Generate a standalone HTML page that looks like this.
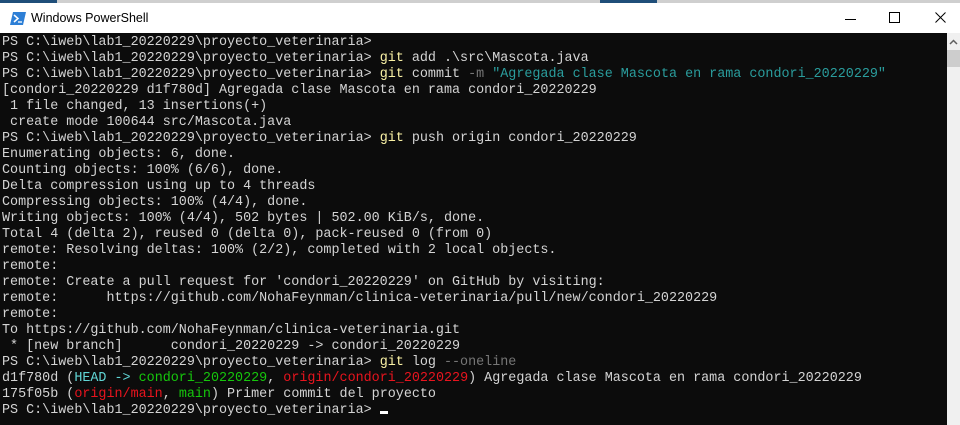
<!DOCTYPE html>
<html><head><meta charset="utf-8"><style>
body{margin:0;width:960px;height:425px;overflow:hidden;background:#0c0c0c;position:relative;font-family:"Liberation Sans",sans-serif}
#top{position:absolute;left:0;top:0;width:960px;height:3px;background:#cfcfcf}
#tb{position:absolute;left:0;top:3px;width:960px;height:30px;background:#fff}
#title{position:absolute;left:31px;top:8px;font-size:12.5px;color:#000}
#term{position:absolute;left:2px;top:35px;font-family:"Liberation Mono",monospace;font-size:13.4px;line-height:16px;color:#d4d4d4;white-space:pre}
#sb{position:absolute;left:947px;top:33px;width:13px;height:392px;background:#f0f0f0}
.y{color:#f9f1a5}.c{color:#2a9d9d}.g{color:#767676}.h{color:#61d6d6}.gr{color:#16c60c}.r{color:#e8141e}
.cur{display:inline-block;width:8px;height:3px;background:#fff;vertical-align:-1px}
</style></head><body>
<div id="top"><div style="position:absolute;left:0;top:0;width:57px;height:3px;background:#1f4e79"></div><div style="position:absolute;left:600px;top:0;width:57px;height:3px;background:#1f4e79"></div></div>
<div id="tb">
<svg style="position:absolute;left:10px;top:9px" width="16" height="13" viewBox="0 0 16 13"><polygon points="3,0 16,0 13,13 0,13" fill="#2d7fd6"/><polyline points="4,3 8,6.5 4,10" fill="none" stroke="#fff" stroke-width="1.5"/><line x1="8" y1="10" x2="12" y2="10" stroke="#fff" stroke-width="1.3"/></svg>
<div id="title">Windows PowerShell</div>
<svg style="position:absolute;left:845px;top:10px" width="12" height="12"><line x1="0" y1="6.5" x2="11" y2="6.5" stroke="#000"/></svg>
<svg style="position:absolute;left:889px;top:9px" width="12" height="12"><rect x="0.5" y="0.5" width="10" height="10" fill="none" stroke="#000"/></svg>
<svg style="position:absolute;left:935px;top:9px" width="12" height="12"><path d="M0.5 0.5L10.5 10.5M10.5 0.5L0.5 10.5" stroke="#000"/></svg>
</div>
<div id="sb"><svg style="position:absolute;left:2px;top:6px" width="9" height="6"><polyline points="1,5 4.5,1.5 8,5" fill="none" stroke="#606060" stroke-width="1.5"/></svg><div style="position:absolute;left:0;top:17px;width:13px;height:17px;background:#cdcdcd"></div></div>
<div id="term">PS C:\iweb\lab1_20220229\proyecto_veterinaria>
PS C:\iweb\lab1_20220229\proyecto_veterinaria> <span class="y">git</span> add .\src\Mascota.java
PS C:\iweb\lab1_20220229\proyecto_veterinaria> <span class="y">git</span> commit <span class="g">-m</span> <span class="c">"Agregada clase Mascota en rama condori_20220229"</span>
[condori_20220229 d1f780d] Agregada clase Mascota en rama condori_20220229
 1 file changed, 13 insertions(+)
 create mode 100644 src/Mascota.java
PS C:\iweb\lab1_20220229\proyecto_veterinaria> <span class="y">git</span> push origin condori_20220229
Enumerating objects: 6, done.
Counting objects: 100% (6/6), done.
Delta compression using up to 4 threads
Compressing objects: 100% (4/4), done.
Writing objects: 100% (4/4), 502 bytes | 502.00 KiB/s, done.
Total 4 (delta 2), reused 0 (delta 0), pack-reused 0 (from 0)
remote: Resolving deltas: 100% (2/2), completed with 2 local objects.
remote:
remote: Create a pull request for 'condori_20220229' on GitHub by visiting:
remote:      https://github.com/NohaFeynman/clinica-veterinaria/pull/new/condori_20220229
remote:
To https://github.com/NohaFeynman/clinica-veterinaria.git
 * [new branch]      condori_20220229 -> condori_20220229
PS C:\iweb\lab1_20220229\proyecto_veterinaria> <span class="y">git</span> log <span class="g">--oneline</span>
d1f780d (<span class="h">HEAD -></span> <span class="gr">condori_20220229</span>, <span class="r">origin/condori_20220229</span>) Agregada clase Mascota en rama condori_20220229
175f05b (<span class="r">origin/main</span>, <span class="gr">main</span>) Primer commit del proyecto
PS C:\iweb\lab1_20220229\proyecto_veterinaria> <span class="cur"></span></div>
</body></html>
